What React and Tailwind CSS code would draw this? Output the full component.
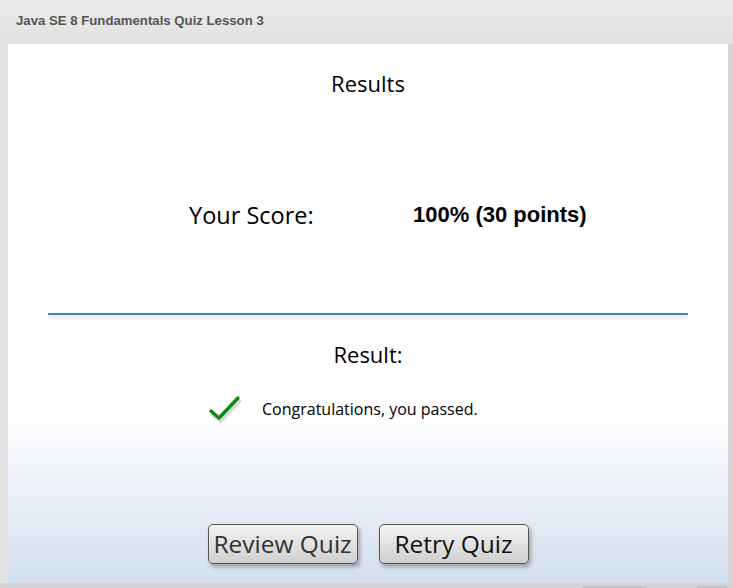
import React from "react";

function CheckMark() {
  return (
    <svg width="34" height="30" viewBox="0 0 34 30" className="shrink-0">
      <path d="M3 18 L11 25 L30 5" fill="none" stroke="#d8d8d8" strokeWidth="4" transform="translate(1.5,2)" strokeLinecap="round" />
      <path d="M3 17 L11 24 L30 4" fill="none" stroke="#0f8a0f" strokeWidth="3.4" strokeLinecap="round" strokeLinejoin="round" />
    </svg>
  );
}

function QuizButton({ label, dim }) {
  return (
    <button
      className={`w-[150px] h-[40px] rounded-[5px] border border-[#555] bg-gradient-to-b from-[#f4f4f4] to-[#cfcfcf] shadow-[2px_3px_4px_rgba(0,0,0,0.3)] text-[24.5px] leading-none ${
        dim ? "text-[#333]" : "text-[#111]"
      }`}
      style={{ fontFamily: '"Open Sans", "Noto Sans", sans-serif' }}
    >
      {label}
    </button>
  );
}

export default function App() {
  const body = { fontFamily: '"Open Sans", "Noto Sans", sans-serif' };

  return (
    <div className="w-[733px] h-[588px] bg-[#e4e4e4] flex flex-col overflow-hidden">
      {/* barre du titre */}
      <div
        className="h-[44px] px-4 pt-[11px] text-[13.2px] font-bold text-[#555] bg-gradient-to-b from-[#e9e9e9] to-[#e3e3e3]"
        style={{ fontFamily: '"Liberation Sans", Arial, sans-serif' }}
      >
        Java SE 8 Fundamentals Quiz Lesson 3
      </div>

      <div className="flex">
        <div className="w-[8px]" />
        <div
          className="w-[720px] h-[539px] flex flex-col items-center bg-gradient-to-b from-white from-[68%] to-[#d4e0ee] text-black"
          style={body}
        >
          <div className="mt-[25px] text-[22px] leading-[28px]">Results</div>

          <div className="mt-[103px] w-full flex items-center">
            <div className="ml-[181px] w-[224px] text-[23.5px] leading-[30px]">Your Score:</div>
            <div
              className="text-[22px] font-bold leading-[30px]"
              style={{ fontFamily: '"Liberation Sans", Arial, sans-serif' }}
            >
              100% (30 points)
            </div>
          </div>

          <div className="mt-[83px] w-[640px] h-[2px] bg-[#4a7ebb] shadow-[0_3px_3px_rgba(0,0,0,0.15)]" />

          <div className="mt-[25px] text-[22px] leading-[28px]">Result:</div>

          <div className="mt-[26px] w-full flex items-center">
            <div className="ml-[200px] w-[54px]">
              <CheckMark />
            </div>
            <div className="text-[16px] leading-[20px]">Congratulations, you passed.</div>
          </div>

          <div className="mt-[100px] flex gap-[21px]">
            <QuizButton label="Review Quiz" dim />
            <QuizButton label="Retry Quiz" />
          </div>
        </div>
        <div className="flex-1 bg-[#d6d6d6]" />
      </div>

      <div className="flex-1 bg-[#d4d4d4] flex">
        <div className="ml-[582px] mt-[3px] w-[64px] bg-[#c4c4c4]" />
        <div className="ml-[51px] mt-[3px] w-[30px] bg-[#c4c4c4]" />
      </div>
    </div>
  );
}
